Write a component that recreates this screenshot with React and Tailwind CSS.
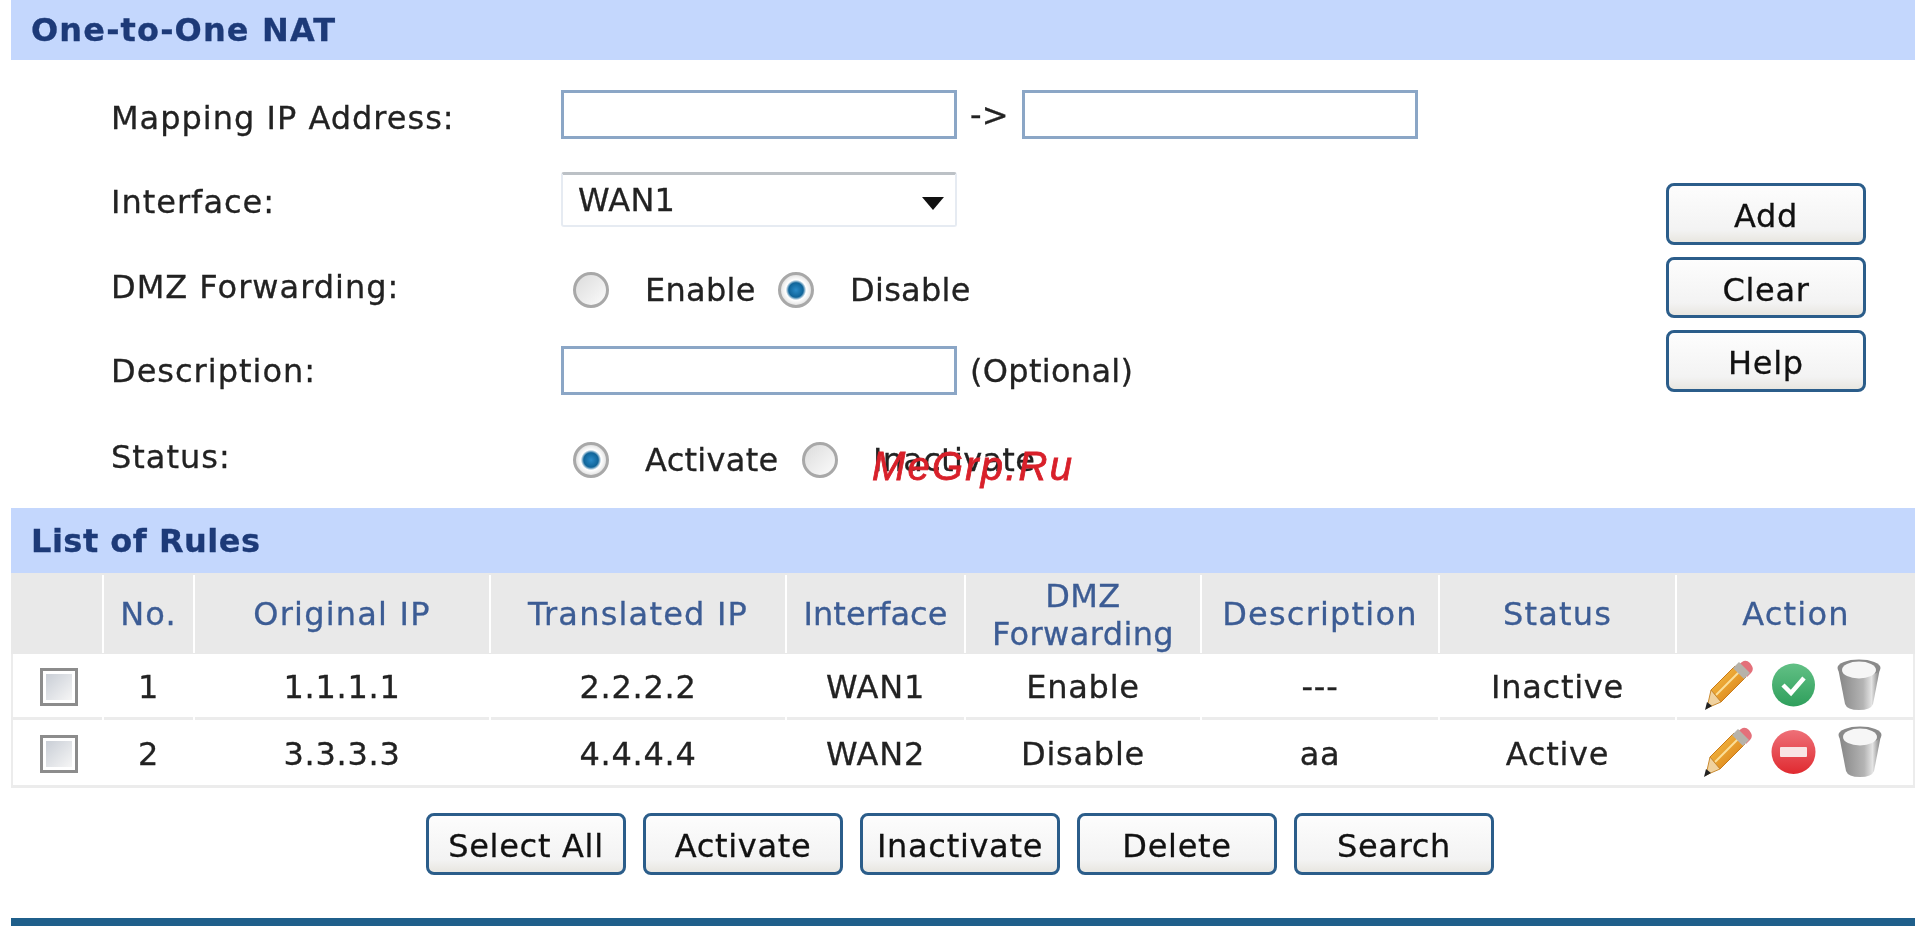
import React from "react";

const btn = "flex items-center justify-center w-[200px] pt-[4px] rounded-[8px] border-[3px] border-[#2b5d8a] bg-[linear-gradient(#fdfdfd_0%,#f3f3f3_78%,#e8e6e0_100%)] text-[#111] text-[32px] tracking-[0.7px] leading-none";
const input = "block w-[396px] h-[49px] border-[3px] border-[#8ba6c6] bg-white";
const radio = "block w-[36px] h-[36px] rounded-full appearance-none border-[3px] border-[#a8a8a8]";
const radioOff = "bg-[linear-gradient(135deg,#dcdcdc,#fbfbfb)]";
const radioOn = "bg-[radial-gradient(circle,#2a8bc8_0%,#0f6499_34%,#ffffff_48%,#f0f0f0_62%,#b8b8b8_100%)]";
const grid = "grid grid-cols-[93px_91px_296px_296px_179px_236px_238px_237px_238px]";
const txt = "text-[32px] leading-none text-[#222] tracking-[0.3px]";

function Pencil({ id }) {
  return (
    <svg width="50" height="50" viewBox="0 0 50 50">
      <defs>
        <linearGradient id={id} x1="0" y1="0" x2="1" y2="1">
          <stop offset="0" stopColor="#f9c64e" />
          <stop offset="1" stopColor="#d6770f" />
        </linearGradient>
      </defs>
      <path d="M7 30 L31 6 L42 17 L17 42 Z" fill={`url(#${id})`} stroke="#c97a18" strokeWidth="1" />
      <path d="M12 35 L36 11" stroke="#fbdf9a" strokeWidth="2" />
      <path d="M34 5 L38 2 Q42 -1 46 3 L48 6 Q50 10 47 13 L43 17 Z" fill="#e4707a" />
      <path d="M29 8 L35 2 L46 13 L40 19 Z" fill="#b6b2aa" />
      <path d="M7 30 L17 42 L3 48 Z" fill="#f0d2a0" stroke="#c98a30" strokeWidth="1" />
      <path d="M3 42 L8 46 L1 50 Z" fill="#222" />
    </svg>
  );
}

function Check({ id }) {
  return (
    <svg width="45" height="45" viewBox="0 0 45 45">
      <defs>
        <linearGradient id={id} x1="0" y1="0" x2="0" y2="1">
          <stop offset="0" stopColor="#62c085" />
          <stop offset="1" stopColor="#2f9f5c" />
        </linearGradient>
      </defs>
      <circle cx="22.5" cy="22" r="21.5" fill={`url(#${id})`} />
      <path d="M12 22 L20 30 L33 15" fill="none" stroke="#fff" strokeWidth="4.5" />
    </svg>
  );
}

function Minus({ id }) {
  return (
    <svg width="47" height="45" viewBox="0 0 47 45">
      <defs>
        <linearGradient id={id} x1="0" y1="0" x2="0" y2="1">
          <stop offset="0" stopColor="#ee7078" />
          <stop offset="1" stopColor="#e02a30" />
        </linearGradient>
      </defs>
      <circle cx="23.5" cy="22" r="22" fill={`url(#${id})`} />
      <rect x="10" y="17" width="27" height="10" rx="1" fill="#f8e4e4" />
    </svg>
  );
}

function Trash({ id }) {
  return (
    <svg width="44" height="52" viewBox="0 0 44 52">
      <defs>
        <linearGradient id={id} x1="0" y1="0" x2="1" y2="0">
          <stop offset="0" stopColor="#858585" />
          <stop offset="0.6" stopColor="#b4b4b4" />
          <stop offset="0.8" stopColor="#e4e4e4" />
          <stop offset="1" stopColor="#777" />
        </linearGradient>
      </defs>
      <path d="M1 9 L8 45 Q10 51 22 51 Q34 51 36 45 L43 9 Z" fill={`url(#${id})`} />
      <ellipse cx="22" cy="9" rx="21.5" ry="8.5" fill="#8a8a8a" />
      <ellipse cx="22" cy="11" rx="17" ry="8.5" fill="#f6f6f6" />
    </svg>
  );
}

function Row({ label, h, gap, shift, children }) {
  return (
    <div className={`grid grid-cols-[450px_1fr] items-center ${h} ${gap}`}>
      <span className={`text-[32px] leading-none text-[#222] tracking-[1px] ${shift}`}>{label}</span>
      <div className="flex items-center">{children}</div>
    </div>
  );
}

function Head({ children, track }) {
  return <div className={`bg-[#c4d7fd] h-full flex items-center pl-[20px] text-[32px] font-bold leading-none text-[#1d3a78] ${track}`}>{children}</div>;
}

const cols = ["", "No.", "Original IP", "Translated IP", "Interface", "DMZ Forwarding", "Description", "Status", "Action"];
const rows = [
  { n: "1", a: "1.1.1.1", b: "2.2.2.2", i: "WAN1", d: "Enable", x: "---", s: "Inactive", ok: true },
  { n: "2", a: "3.3.3.3", b: "4.4.4.4", i: "WAN2", d: "Disable", x: "aa", s: "Active", ok: false },
];

function Cell({ children, last, divider }) {
  return (
    <div className={`flex items-center justify-center pt-[3px] text-[32px] tracking-[0.75px] leading-none text-[#222] ${divider ? "border-b-[3px] border-[#ececec]" : ""} ${last ? "" : "mr-[2px]"}`}>
      {children}
    </div>
  );
}

export default function App() {
  return (
    <div className="relative h-[926px] w-full overflow-hidden bg-white pl-[11px] pr-[13px] blur-[0.7px] [-webkit-text-stroke:0.3px] font-['DejaVu_Sans',sans-serif]">
      <div className="h-[60px]"><Head track="tracking-[1.15px]">One-to-One NAT</Head></div>

      <div className="h-[448px] flex">
        <div className="pl-[100px] w-[1655px]">
          <Row h="h-[49px]" gap="mt-[30px]" label="Mapping IP Address:" shift="mt-[6px]">
            <div className={input} />
            <span className={`w-[65px] text-center ${txt}`}>-&gt;</span>
            <div className={input} />
          </Row>
          <Row h="h-[55px]" gap="mt-[33px]" label="Interface:" shift="mt-[5px]">
            <div className={`relative flex items-center w-[396px] h-[55px] rounded-[3px] border-2 border-[#e6ebf2] border-t-[3px] border-t-[#bcc1c6] pl-[15px] ${txt}`}>
              WAN1
              <svg className="absolute right-[11px] top-[22px]" width="22" height="13" viewBox="0 0 22 13"><path d="M0 0 H22 L11 13 Z" fill="#111" /></svg>
            </div>
          </Row>
          <Row h="h-[36px]" gap="mt-[44px]" label="DMZ Forwarding:" shift="mb-[5px]">
            <input type="radio" name="dmz" readOnly className={`ml-[12px] ${radio} ${radioOff}`} />
            <span className={`ml-[36px] w-[133px] ${txt}`}>Enable</span>
            <input type="radio" name="dmz" readOnly className={`${radio} ${radioOn}`} />
            <span className={`ml-[36px] ${txt}`}>Disable</span>
          </Row>
          <Row h="h-[49px]" gap="mt-[39px]" label="Description:" shift="">
            <div className={input} />
            <span className={`ml-[13px] ${txt}`}>(Optional)</span>
          </Row>
          <Row h="h-[36px]" gap="mt-[46px]" label="Status:" shift="mb-[5px]">
            <input type="radio" name="st" readOnly className={`ml-[12px] ${radio} ${radioOn}`} />
            <span className={`ml-[36px] w-[157px] ${txt}`}>Activate</span>
            <input type="radio" name="st" readOnly className={`${radio} ${radioOff}`} />
            <span className={`ml-[35px] ${txt}`}>Inactivate</span>
          </Row>
        </div>
        <div className="pt-[123px] flex flex-col gap-[12px]">
          <button className={`${btn} h-[62px]`}>Add</button>
          <button className={`${btn} h-[61px]`}>Clear</button>
          <button className={`${btn} h-[62px]`}>Help</button>
        </div>
      </div>

      <div className="h-[65px]"><Head track="tracking-[0.5px]">List of Rules</Head></div>

      <div className={`${grid} h-[81px] bg-[#e9e9e9]`}>
        {cols.map((c, i) => (
          <div key={i} className={`flex items-center justify-center text-center my-[2px] text-[32px] leading-[38px] text-[#3c5c94] ${i < 8 ? "border-r-2 border-white" : ""} ${i === 5 ? "px-[20px] pt-[2px] tracking-[0.4px]" : i === 4 ? "tracking-[0.1px]" : "tracking-[1.2px]"}`}>
            {c}
          </div>
        ))}
      </div>

      <div className="border-x-2 border-b-[3px] border-[#ececec]">
        {rows.map((r, idx) => (
          <div key={r.n} className={`${grid} ml-[-2px] mr-[-2px] ${idx === 0 ? "h-[66px]" : "h-[65px]"}`}>
            <Cell divider={idx === 0}>
              <div className="ml-[5px] w-[38px] h-[38px] border-[3px] border-[#8c8c8c] bg-white p-[3px]">
                <div className="h-full w-full bg-[linear-gradient(135deg,#c9ced6,#f6f6f6)]" />
              </div>
            </Cell>
            <Cell divider={idx === 0}>{r.n}</Cell>
            <Cell divider={idx === 0}>{r.a}</Cell>
            <Cell divider={idx === 0}>{r.b}</Cell>
            <Cell divider={idx === 0}>{r.i}</Cell>
            <Cell divider={idx === 0}>{r.d}</Cell>
            <Cell divider={idx === 0}>{r.x}</Cell>
            <Cell divider={idx === 0}>{r.s}</Cell>
            <Cell divider={idx === 0} last>
              <div className="flex items-center mb-[4px] mr-[7px]">
                <Pencil id={`p${idx}`} />
                <span className="ml-[17px] flex">{r.ok ? <Check id={`c${idx}`} /> : <Minus id={`m${idx}`} />}</span>
                <span className="ml-[21px] flex"><Trash id={`t${idx}`} /></span>
              </div>
            </Cell>
          </div>
        ))}
      </div>

      <div className="mt-[25px] flex justify-center gap-[17px] pr-[6px]">
        {["Select All", "Activate", "Inactivate", "Delete", "Search"].map((b) => (
          <button key={b} className={`${btn} h-[62px]`}>{b}</button>
        ))}
      </div>

      <div className="mt-[43px] h-[8px] bg-[#1f5f8b]" />

      <span className="absolute left-[872px] top-[445px] text-[40px] leading-[42px] italic font-['Liberation_Sans',sans-serif] tracking-[2.2px] text-[#d8202a] [-webkit-text-stroke:0.8px_#d8202a]">MeGrp.Ru</span>
    </div>
  );
}
